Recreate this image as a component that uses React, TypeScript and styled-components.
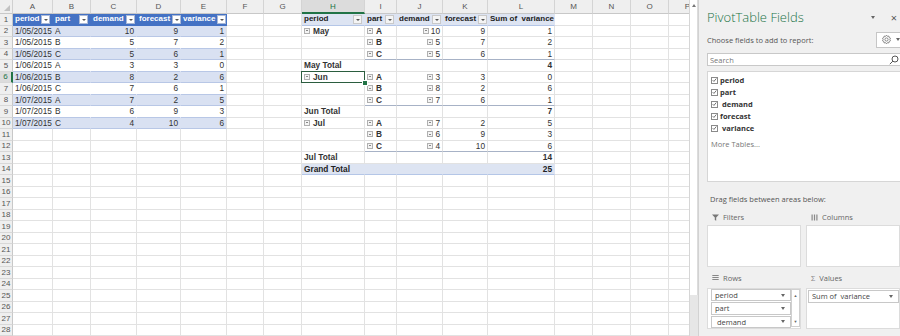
import React from 'react';
import styled, { createGlobalStyle, css } from 'styled-components';

const GlobalStyle = createGlobalStyle`
  html, body {
    margin: 0;
    padding: 0;
    background: #fff;
  }
  body {
    font-family: 'Liberation Sans', Arial, sans-serif;
  }
  * {
    box-sizing: border-box;
  }
`;

type Kind = 'th' | 'band' | 'tw' | 'ph' | 'grand' | 'plain';

type CellDef = {
  text?: string;
  kind?: Kind;
  right?: boolean;
  bold?: boolean;
  filter?: boolean;
  minus?: boolean;
  groupEnd?: boolean;
  selected?: boolean;
  edge?: boolean;
};

const COLS = [
  { l: 'A', w: 40 },
  { l: 'B', w: 38 },
  { l: 'C', w: 46 },
  { l: 'D', w: 44 },
  { l: 'E', w: 46 },
  { l: 'F', w: 37 },
  { l: 'G', w: 38 },
  { l: 'H', w: 63 },
  { l: 'I', w: 32 },
  { l: 'J', w: 46 },
  { l: 'K', w: 45 },
  { l: 'L', w: 67 },
  { l: 'M', w: 38 },
  { l: 'N', w: 38 },
  { l: 'O', w: 38 },
  { l: 'P', w: 38 },
];

const ROWS = Array.from({ length: 28 }, (_, i) => i + 1);

const cells: Record<string, CellDef> = {};
const put = (r: number, c: string, d: CellDef) => {
  cells[r + c] = d;
};

// source table A1:E10
['period', 'part', 'demand', 'forecast', 'variance'].forEach((t, i) => {
  put(1, 'ABCDE'[i], { text: t, kind: 'th', filter: true });
});
const source = [
  ['1/05/2015', 'A', '10', '9', '1'],
  ['1/05/2015', 'B', '5', '7', '2'],
  ['1/05/2015', 'C', '5', '6', '1'],
  ['1/06/2015', 'A', '3', '3', '0'],
  ['1/06/2015', 'B', '8', '2', '6'],
  ['1/06/2015', 'C', '7', '6', '1'],
  ['1/07/2015', 'A', '7', '2', '5'],
  ['1/07/2015', 'B', '6', '9', '3'],
  ['1/07/2015', 'C', '4', '10', '6'],
];
source.forEach((row, i) => {
  const r = i + 2;
  row.forEach((t, j) => {
    put(r, 'ABCDE'[j], {
      text: t,
      kind: r % 2 === 0 ? 'band' : 'tw',
      right: j > 1,
      edge: j === 4,
    });
  });
});

// pivot table H1:L14
['period', 'part', 'demand', 'forecast'].forEach((t, i) => {
  put(1, 'HIJK'[i], { text: t, kind: 'ph', filter: true });
});
put(1, 'L', { text: 'Sum of  variance', kind: 'ph' });

const groups = [
  { month: 'May', start: 2, rows: [['A', '10', '9', '1'], ['B', '5', '7', '2'], ['C', '5', '6', '1']], total: '4' },
  { month: 'Jun', start: 6, rows: [['A', '3', '3', '0'], ['B', '8', '2', '6'], ['C', '7', '6', '1']], total: '7' },
  { month: 'Jul', start: 10, rows: [['A', '7', '2', '5'], ['B', '6', '9', '3'], ['C', '4', '10', '6']], total: '14' },
];
groups.forEach((g) => {
  g.rows.forEach((row, i) => {
    const r = g.start + i;
    const end = i === 2;
    if (i === 0) put(r, 'H', { text: g.month, bold: true, minus: true, selected: g.month === 'Jun' });
    put(r, 'I', { text: row[0], bold: true, minus: true, groupEnd: end });
    put(r, 'J', { text: row[1], right: true, minus: true, groupEnd: end });
    put(r, 'K', { text: row[2], right: true, groupEnd: end });
    put(r, 'L', { text: row[3], right: true, groupEnd: end });
  });
  const tr = g.start + 3;
  put(tr, 'H', { text: `${g.month} Total`, bold: true });
  put(tr, 'L', { text: g.total, bold: true, right: true });
});
['H', 'I', 'J', 'K'].forEach((c) => put(14, c, { kind: 'grand', text: c === 'H' ? 'Grand Total' : '' }));
put(14, 'L', { text: '25', kind: 'grand', right: true, bold: true });

const FIELDS = ['period', 'part', ' demand', 'forecast', ' variance'];

const App = () => {
  return (
    <>
      <GlobalStyle />
      <Window>
        <Sheet>
          <Grid>
            <Corner />
            {COLS.map((c) => (
              <ColHead key={c.l} $active={c.l === 'H'}>
                {c.l}
              </ColHead>
            ))}
            {ROWS.map((r) => (
              <React.Fragment key={r}>
                <RowHead $active={r === 6}>{r}</RowHead>
                {COLS.map((c) => {
                  const d = cells[r + c.l] || {};
                  return (
                    <Cell
                      key={c.l}
                      $kind={d.kind || 'plain'}
                      $right={!!d.right}
                      $bold={!!d.bold || d.kind === 'th' || d.kind === 'ph' || d.kind === 'grand'}
                      $spread={!!d.filter}
                      $groupEnd={!!d.groupEnd}
                      $edge={!!d.edge}
                    >
                      {d.minus && !d.right && <MinusBox />}
                      {d.minus && d.right ? (
                        <span>
                          <MinusBox />
                          {d.text}
                        </span>
                      ) : (
                        d.text && <span>{d.text}</span>
                      )}
                      {d.filter && <FilterButton $light={d.kind === 'ph'} />}
                      {d.selected && <Selection />}
                    </Cell>
                  );
                })}
              </React.Fragment>
            ))}
          </Grid>
        </Sheet>
        <VScroll>
          <ScrollTrack>
            <UpArrow />
          </ScrollTrack>
          <ScrollFoot />
        </VScroll>
        <Panel>
          <TitleRow>
            <Title>PivotTable Fields</Title>
            <TitleTools>
              <TinyCaret />
              <CloseMark>×</CloseMark>
            </TitleTools>
          </TitleRow>
          <ChooseRow>
            <Hint>Choose fields to add to report:</Hint>
            <GearButton>
              <svg width="11" height="11" viewBox="0 0 24 24" fill="none" stroke="#666" strokeWidth="1.6">
                <path d="M12 2.5l2 2.6 3.2-.6.6 3.2 2.9 1.5-1.4 2.8 1.4 2.8-2.9 1.5-.6 3.2-3.2-.6-2 2.6-2-2.6-3.2.6-.6-3.2-2.9-1.5 1.4-2.8-1.4-2.8 2.9-1.5.6-3.2 3.2.6z" />
                <circle cx="12" cy="12" r="3.5" />
              </svg>
              <TinyCaret />
            </GearButton>
          </ChooseRow>
          <SearchBox>
            <Placeholder>Search</Placeholder>
            <svg width="10" height="10" viewBox="0 0 10 10" fill="none" stroke="#555" strokeWidth="1">
              <circle cx="6" cy="4" r="3" />
              <path d="M3.9 6.1L0.8 9.2" />
            </svg>
          </SearchBox>
          <FieldList>
            {FIELDS.map((f) => (
              <FieldItem key={f}>
                <CheckBox>
                  <svg width="6" height="6" viewBox="0 0 6 6" fill="none" stroke="#444" strokeWidth="0.9">
                    <path d="M0.8 3.2L2.3 4.7L5.2 1.2" />
                  </svg>
                </CheckBox>
                <FieldName>{f}</FieldName>
              </FieldItem>
            ))}
            <MoreTables>More Tables...</MoreTables>
          </FieldList>
          <DragHint>Drag fields between areas below:</DragHint>
          <Areas>
            <Area>
              <AreaHead>
                <svg width="7" height="7" viewBox="0 0 7 7" fill="#777">
                  <path d="M0 0.5h7L4.2 3.5V6.8L2.8 6V3.5z" />
                </svg>
                Filters
              </AreaHead>
              <AreaBox $h={42} />
            </Area>
            <Area>
              <AreaHead>
                <svg width="7" height="7" viewBox="0 0 7 7" fill="#888">
                  <rect x="0.5" y="0.5" width="1.2" height="6" />
                  <rect x="2.9" y="0.5" width="1.2" height="6" />
                  <rect x="5.3" y="0.5" width="1.2" height="6" />
                </svg>
                Columns
              </AreaHead>
              <AreaBox $h={42} />
            </Area>
            <Area>
              <AreaHead>
                <svg width="7" height="7" viewBox="0 0 7 7" fill="#888">
                  <rect x="0.3" y="1" width="6.4" height="1" />
                  <rect x="0.3" y="3" width="6.4" height="1" />
                  <rect x="0.3" y="5" width="6.4" height="1" />
                </svg>
                Rows
              </AreaHead>
              <AreaBox $h={41}>
                <AreaItems>
                  {['period', 'part', ' demand'].map((f) => (
                    <AreaItem key={f}>
                      <span>{f}</span>
                      <TinyCaret />
                    </AreaItem>
                  ))}
                </AreaItems>
                <MiniScroll>
                  <MiniArrow>▲</MiniArrow>
                  <MiniArrow>▼</MiniArrow>
                </MiniScroll>
              </AreaBox>
            </Area>
            <Area>
              <AreaHead>
                <SigmaMark>Σ</SigmaMark>
                Values
              </AreaHead>
              <AreaBox $h={41}>
                <AreaItems $tight>
                  <AreaItem>
                    <span>Sum of  variance</span>
                    <TinyCaret />
                  </AreaItem>
                </AreaItems>
              </AreaBox>
            </Area>
          </Areas>
        </Panel>
      </Window>
    </>
  );
};

export default App;

const Window = styled.div`
  display: flex;
  width: 900px;
  height: 336px;
  overflow: hidden;
  background: #fff;
`;

const Sheet = styled.div`
  width: 689px;
  height: 336px;
  overflow: hidden;
  flex: none;
`;

const Grid = styled.div`
  display: grid;
  grid-template-columns: 13px ${COLS.map((c) => `${c.w}px`).join(' ')};
  grid-template-rows: 14px repeat(28, 11.5px);
  width: max-content;
`;

const Corner = styled.div`
  position: relative;
  background: #efefef;
  border-right: 1px solid #d0d0d0;
  border-bottom: 1px solid #c8c8c8;
  &::after {
    content: '';
    position: absolute;
    right: 2px;
    bottom: 2px;
    border-left: 6px solid transparent;
    border-bottom: 6px solid #c2c2c2;
  }
`;

const ColHead = styled.div<{ $active: boolean }>`
  display: flex;
  align-items: center;
  justify-content: center;
  font-size: 8px;
  color: #555;
  background: #efefef;
  border-right: 1px solid #d4d4d4;
  border-bottom: 1px solid #c8c8c8;
  ${(p) =>
    p.$active &&
    css`
      background: #dcdcdc;
      color: #217346;
      border-bottom: 2px solid #217346;
    `}
`;

const RowHead = styled.div<{ $active: boolean }>`
  display: flex;
  align-items: center;
  justify-content: center;
  font-size: 8px;
  color: #555;
  background: #efefef;
  border-right: 1px solid #c8c8c8;
  border-bottom: 1px solid #d8d8d8;
  ${(p) =>
    p.$active &&
    css`
      background: #dcdcdc;
      color: #217346;
      border-right: 2px solid #217346;
    `}
`;

const kindStyles: Record<Kind, ReturnType<typeof css>> = {
  th: css`
    background: #4472c4;
    color: #fff;
    font-size: 8px;
    border-right-color: #4472c4;
    border-bottom-color: #4472c4;
  `,
  band: css`
    background: #d9e1f2;
    border-right-color: #d9e1f2;
    border-bottom-color: #b8c7e6;
  `,
  tw: css`
    background: #fff;
    border-right-color: #fff;
    border-bottom-color: #b8c7e6;
  `,
  ph: css`
    background: #dde4f2;
    color: #222;
    font-size: 8px;
    border-right-color: #dde4f2;
    border-bottom-color: #b4c6e7;
  `,
  grand: css`
    background: #dde4f2;
    color: #222;
    border-right-color: #dde4f2;
    border-bottom-color: #b4c6e7;
  `,
  plain: css``,
};

const Cell = styled.div<{
  $kind: Kind;
  $right: boolean;
  $bold: boolean;
  $spread: boolean;
  $groupEnd: boolean;
  $edge: boolean;
}>`
  position: relative;
  display: flex;
  align-items: center;
  justify-content: ${(p) => (p.$spread ? 'space-between' : p.$right ? 'flex-end' : 'flex-start')};
  gap: 2px;
  padding: 0 2px 0 2px;
  font-size: 8.3px;
  line-height: 10px;
  color: #333;
  font-weight: ${(p) => (p.$bold ? 700 : 400)};
  white-space: pre;
  border-right: 1px solid #e2e2e2;
  border-bottom: 1px solid #e2e2e2;
  ${(p) => kindStyles[p.$kind]}
  ${(p) =>
    p.$groupEnd &&
    css`
      border-bottom: 1px solid #a7b2c6;
    `}
  ${(p) =>
    p.$edge &&
    css`
      border-right-color: #e2e2e2;
    `}
  & > span {
    display: inline-flex;
    align-items: center;
    gap: 1px;
  }
`;

const FilterButton = styled.i<{ $light: boolean }>`
  position: relative;
  flex: none;
  width: 9px;
  height: 9px;
  background: ${(p) => (p.$light ? '#f4f4f4' : '#fff')};
  border: 1px solid ${(p) => (p.$light ? '#c9c9c9' : '#a9b8d6')};
  &::after {
    content: '';
    position: absolute;
    left: 2px;
    top: 3px;
    border-left: 2px solid transparent;
    border-right: 2px solid transparent;
    border-top: 2px solid #555;
  }
`;

const MinusBox = styled.i`
  position: relative;
  display: inline-block;
  flex: none;
  width: 6px;
  height: 6px;
  margin-right: 1px;
  border: 1px solid #b0b0b0;
  background: #f4f4f4;
  &::after {
    content: '';
    position: absolute;
    left: 1px;
    top: 1.5px;
    width: 2px;
    height: 1px;
    background: #888;
  }
`;

const Selection = styled.div`
  position: absolute;
  inset: -1px -1px -1px -1px;
  border: 1.5px solid #2b5d3f;
  pointer-events: none;
  z-index: 2;
  &::after {
    content: '';
    position: absolute;
    right: -4px;
    bottom: -4px;
    width: 4px;
    height: 4px;
    background: #217346;
    border: 1px solid #fff;
  }
`;

const VScroll = styled.div`
  flex: none;
  width: 9px;
  height: 336px;
  display: flex;
  flex-direction: column;
  border-left: 1px solid #d6d6d6;
`;

const ScrollTrack = styled.div`
  height: 295px;
  background: #fff;
  border-right: 1px solid #dcdcdc;
  padding-top: 4px;
  display: flex;
  justify-content: center;
`;

const UpArrow = styled.i`
  width: 0;
  height: 0;
  border-left: 2.5px solid transparent;
  border-right: 2.5px solid transparent;
  border-bottom: 3px solid #777;
`;

const ScrollFoot = styled.div`
  flex: 1;
  background: #e6e6e6;
`;

const Panel = styled.aside`
  flex: 1;
  height: 336px;
  background: #f0f0f0;
  border-left: 1px solid #d2d2d2;
  padding-left: 8px;
  display: flex;
  flex-direction: column;
  font-family: 'Open Sans', 'Noto Sans', sans-serif;
  color: #444;
  overflow: hidden;
`;

const TitleRow = styled.div`
  height: 31px;
  display: flex;
  align-items: center;
  justify-content: space-between;
  padding-top: 3px;
`;

const Title = styled.h1`
  margin: 0;
  font-size: 13px;
  font-weight: 300;
  color: #217346;
`;

const TitleTools = styled.div`
  display: flex;
  align-items: center;
  gap: 16px;
  padding-right: 3px;
`;

const TinyCaret = styled.i`
  flex: none;
  width: 0;
  height: 0;
  border-left: 2.5px solid transparent;
  border-right: 2.5px solid transparent;
  border-top: 3px solid #666;
`;

const CloseMark = styled.span`
  font-size: 11px;
  line-height: 11px;
  color: #555;
`;

const ChooseRow = styled.div`
  height: 17px;
  display: flex;
  align-items: center;
  justify-content: space-between;
`;

const Hint = styled.span`
  font-size: 7.5px;
  color: #555;
`;

const GearButton = styled.div`
  width: 26px;
  height: 16px;
  margin-right: -2px;
  display: flex;
  align-items: center;
  gap: 4px;
  padding-left: 4px;
  background: #fff;
  border: 1px solid #c6c6c6;
`;

const SearchBox = styled.div`
  margin-top: 5px;
  height: 13px;
  display: flex;
  align-items: center;
  justify-content: space-between;
  padding: 0 1px 0 2px;
  background: #fff;
  border: 1px solid #c8c8c8;
  border-right: none;
`;

const Placeholder = styled.span`
  font-size: 7.5px;
  color: #777;
`;

const FieldList = styled.div`
  margin-top: 5px;
  height: 111px;
  padding: 2px 0 0 3px;
  background: #fff;
  border: 1px solid #d6d6d6;
  border-right: none;
  display: flex;
  flex-direction: column;
`;

const FieldItem = styled.div`
  height: 12px;
  display: flex;
  align-items: center;
  gap: 2px;
`;

const CheckBox = styled.span`
  width: 7px;
  height: 7px;
  display: flex;
  align-items: center;
  justify-content: center;
  border: 1px solid #8a8a8a;
  background: #fff;
`;

const FieldName = styled.span`
  font-size: 7.5px;
  font-weight: 700;
  color: #333;
  white-space: pre;
`;

const MoreTables = styled.div`
  margin-top: 5px;
  font-size: 7.5px;
  color: #777;
`;

const DragHint = styled.div`
  height: 27px;
  display: flex;
  align-items: center;
  padding: 6px 0 0 3px;
  font-size: 7.5px;
  color: #555;
`;

const Areas = styled.div`
  display: grid;
  grid-template-columns: 94px 1fr;
  grid-template-rows: 58px 62px;
  column-gap: 5px;
`;

const Area = styled.div`
  display: flex;
  flex-direction: column;
`;

const AreaHead = styled.div`
  flex: 1;
  display: flex;
  align-items: center;
  gap: 4px;
  padding-left: 5px;
  font-size: 7.5px;
  color: #666;
`;

const SigmaMark = styled.span`
  font-size: 7.5px;
  color: #888;
`;

const AreaBox = styled.div<{ $h: number }>`
  height: ${(p) => p.$h}px;
  display: flex;
  background: #fff;
  border: 1px solid #dcdcdc;
`;

const AreaItems = styled.div<{ $tight?: boolean }>`
  flex: 1;
  display: flex;
  flex-direction: column;
  gap: 1px;
  padding: ${(p) => (p.$tight ? '1px 0 0 1px' : '0 0 0 3px')};
`;

const AreaItem = styled.div`
  height: 12.5px;
  display: flex;
  align-items: center;
  justify-content: space-between;
  padding: 0 5px 0 3px;
  background: #fff;
  border: 1px solid #c8c8c8;
  font-size: 7.5px;
  color: #444;
  white-space: pre;
`;

const MiniScroll = styled.div`
  width: 9px;
  display: flex;
  flex-direction: column;
  justify-content: space-between;
  border: 1px solid #d0d0d0;
  margin-bottom: 1px;
`;

const MiniArrow = styled.span`
  height: 10px;
  display: flex;
  align-items: center;
  justify-content: center;
  font-size: 4px;
  color: #666;
  background: #fff;
`;
